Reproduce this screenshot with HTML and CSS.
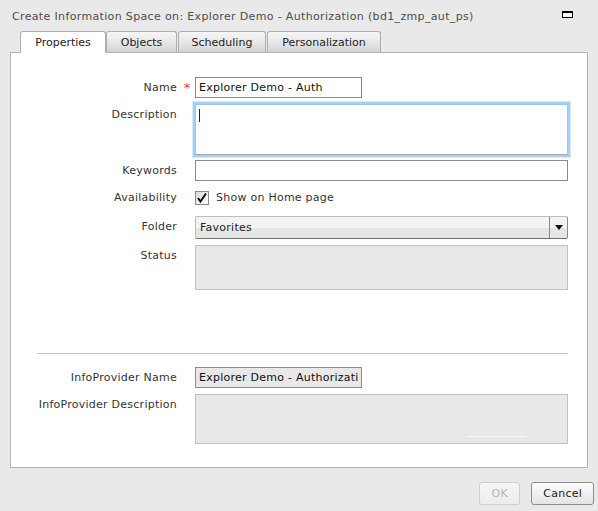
FILE: index.html
```html
<!DOCTYPE html>
<html>
<head>
<meta charset="utf-8">
<link rel="stylesheet" href="styles.css">
</head>
<body>
<div class="dialog">
  <div class="titlebar">
    <span class="title">Create Information Space on: Explorer Demo - Authorization (bd1_zmp_aut_ps)</span>
    <svg class="maximize" width="11" height="7" viewBox="0 0 11 7"><rect x="0.5" y="0.5" width="10" height="6" fill="#fff" stroke="#000"/><rect x="0" y="0" width="11" height="2" fill="#000"/></svg>
  </div>
  <div class="tabs">
    <div class="tab tab-active tab-properties">Properties</div>
    <div class="tab tab-objects">Objects</div>
    <div class="tab tab-scheduling">Scheduling</div>
    <div class="tab tab-personalization">Personalization</div>
  </div>
  <div class="panel">
    <div class="row row-name">
      <div class="label">Name</div>
      <div class="req">*</div>
      <div class="input input-short">Explorer Demo - Auth</div>
    </div>
    <div class="row row-desc">
      <div class="label">Description</div>
      <div class="req"></div>
      <div class="textarea focused"><span class="caret"></span></div>
    </div>
    <div class="row row-keywords">
      <div class="label">Keywords</div>
      <div class="req"></div>
      <div class="input input-long"></div>
    </div>
    <div class="row row-avail">
      <div class="label">Availability</div>
      <div class="req"></div>
      <div class="check-wrap">
        <svg class="checkbox" width="14" height="14" viewBox="0 0 14 14">
          <defs><linearGradient id="cg" x1="0" y1="0" x2="1" y2="1"><stop offset="0" stop-color="#d8d8d8"/><stop offset="1" stop-color="#ffffff"/></linearGradient></defs>
          <rect x="0.5" y="0.5" width="13" height="13" fill="url(#cg)" stroke="#8a8a8a"/>
          <path d="M3 7 L5.5 10.5 L11 2.5" fill="none" stroke="#111" stroke-width="2"/>
        </svg>
        <span class="check-label">Show on Home page</span>
      </div>
    </div>
    <div class="row row-folder">
      <div class="label">Folder</div>
      <div class="req"></div>
      <div class="select">
        <span class="select-text">Favorites</span>
        <span class="select-btn"><svg width="8" height="5" viewBox="0 0 8 5"><path d="M0 0 H8 L4 5 Z" fill="#111"/></svg></span>
      </div>
    </div>
    <div class="row row-status">
      <div class="label">Status</div>
      <div class="req"></div>
      <div class="box box-status"></div>
    </div>
    <div class="separator"></div>
    <div class="row row-ipname">
      <div class="label">InfoProvider Name</div>
      <div class="req"></div>
      <div class="input input-short input-readonly">Explorer Demo - Authorizati</div>
    </div>
    <div class="row row-ipdesc">
      <div class="label">InfoProvider Description</div>
      <div class="req"></div>
      <div class="box box-ipdesc"><span class="box-glint"></span></div>
    </div>
  </div>
  <div class="buttons">
    <div class="btn btn-disabled">OK</div>
    <div class="btn">Cancel</div>
  </div>
</div>
</body>
</html>
```

FILE: styles.css
```css
html, body {
  margin: 0;
  padding: 0;
}
body {
  background: #e9e9e9;
  font-family: "DejaVu Sans", Verdana, sans-serif;
  font-size: 11px;
  letter-spacing: 0.25px;
  color: #333;
  width: 598px;
  height: 511px;
  overflow: hidden;
}
.dialog {
  width: 598px;
  height: 511px;
}
.titlebar {
  height: 31px;
  display: flex;
  align-items: flex-start;
  padding-left: 12px;
  box-sizing: border-box;
  position: relative;
}
.title {
  color: #4d4d4d;
  line-height: 13px;
  margin-top: 10px;
  letter-spacing: 0.35px;
  white-space: nowrap;
}
.maximize {
  position: absolute;
  left: 562px;
  top: 11px;
}
.tabs {
  display: flex;
  height: 21px;
  padding-left: 20px;
  position: relative;
  z-index: 1;
}
.tab {
  box-sizing: border-box;
  height: 21px;
  border: 1px solid #aeaeae;
  border-bottom: none;
  border-radius: 3px 3px 0 0;
  background: linear-gradient(#f6f6f6, #e6e6e6 55%, #d2d2d2);
  color: #222;
  text-align: center;
  line-height: 21px;
  letter-spacing: 0;
}
.tab-active {
  background: #fff;
  height: 22px;
}
.tab-properties { width: 86px; }
.tab-objects { width: 71px; }
.tab-scheduling { width: 88px; margin-left: 1px; }
.tab-personalization { width: 114px; margin-left: 1px; }
.panel {
  margin-left: 10px;
  width: 578px;
  height: 416px;
  box-sizing: border-box;
  border: 1px solid #b4b4b4;
  background: #fff;
  display: flex;
  flex-direction: column;
}
.row {
  display: grid;
  grid-template-columns: 166px 18px 373px;
  align-items: start;
}
.label {
  text-align: right;
  line-height: 21px;
  white-space: nowrap;
}
.req {
  color: #e8383d;
  font-size: 13px;
  line-height: 21px;
  text-align: center;
  padding-left: 2px;
}
.input {
  box-sizing: border-box;
  height: 21px;
  border: 1px solid #8a8a8a;
  background: #fff;
  color: #111;
  line-height: 19px;
  padding-left: 3px;
  white-space: nowrap;
  overflow: hidden;
}
.input-short { width: 167px; }
.input-long { width: 373px; }
.input-readonly {
  background: #e8e8e8;
}
.textarea {
  box-sizing: border-box;
  width: 373px;
  height: 51px;
  border: 1px solid #a9a9a9;
  border-top-color: #9cc7ef;
  border-left-color: #9cc7ef;
  border-right-color: #9cc7ef;
  background: #fff;
  padding: 4px 0 0 3px;
}
.focused {
  box-shadow: 0 0 0 2px #a6cff4, 0 0 0 3px #d6ecfd;
}
.caret {
  display: block;
  width: 1px;
  height: 13px;
  background: #222;
}
.check-wrap {
  display: flex;
  align-items: center;
  height: 21px;
}
.checkbox {
  display: block;
}
.check-label {
  margin-left: 7px;
  line-height: 21px;
}
.select {
  box-sizing: border-box;
  width: 373px;
  height: 23px;
  border: 1px solid #bdbdbd;
  border-bottom-color: #6f6f6f;
  border-right-color: #8a8a8a;
  border-radius: 2px;
  background: linear-gradient(#f3f3f3 0%, #f3f3f3 52%, #e6e6e6 52%, #e6e6e6 100%);
  display: flex;
  align-items: stretch;
  color: #222;
}
.select-text {
  flex: 1;
  line-height: 21px;
  padding-left: 4px;
}
.select-btn {
  width: 17px;
  border-left: 1px solid #8a8a8a;
  display: flex;
  align-items: center;
  justify-content: center;
}
.box {
  box-sizing: border-box;
  width: 373px;
  border: 1px solid #c2c2c2;
  background: #e8e8e8;
  position: relative;
}
.box-status { height: 45px; }
.box-ipdesc { height: 50px; }
.box-glint {
  position: absolute;
  left: 272px;
  top: 41px;
  width: 58px;
  height: 1px;
  background: #f8f8f8;
}
.row-name { margin-top: 24px; }
.row-desc { margin-top: 6px; }
.row-keywords { margin-top: 5px; }
.row-avail { margin-top: 6px; }
.row-folder { margin-top: 8px; }
.row-status { margin-top: 6px; }
.separator {
  margin: 63px 0 0 26px;
  width: 531px;
  height: 1px;
  background: #c8c8c8;
}
.row-ipname { margin-top: 13px; }
.row-ipdesc { margin-top: 6px; }
.buttons {
  display: flex;
  justify-content: flex-end;
  gap: 11px;
  padding: 14px 4px 0 0;
}
.btn {
  box-sizing: border-box;
  height: 23px;
  min-width: 41px;
  padding: 0 11px;
  border: 1px solid #8c8c8c;
  border-radius: 3px;
  background: linear-gradient(#fdfdfd, #f0f0f0 50%, #e4e4e4);
  color: #222;
  line-height: 21px;
  text-align: center;
}
.btn-disabled {
  border-color: #cfcfcf;
  color: #b5b5b5;
  background: linear-gradient(#f6f6f6, #ececec);
}
```
